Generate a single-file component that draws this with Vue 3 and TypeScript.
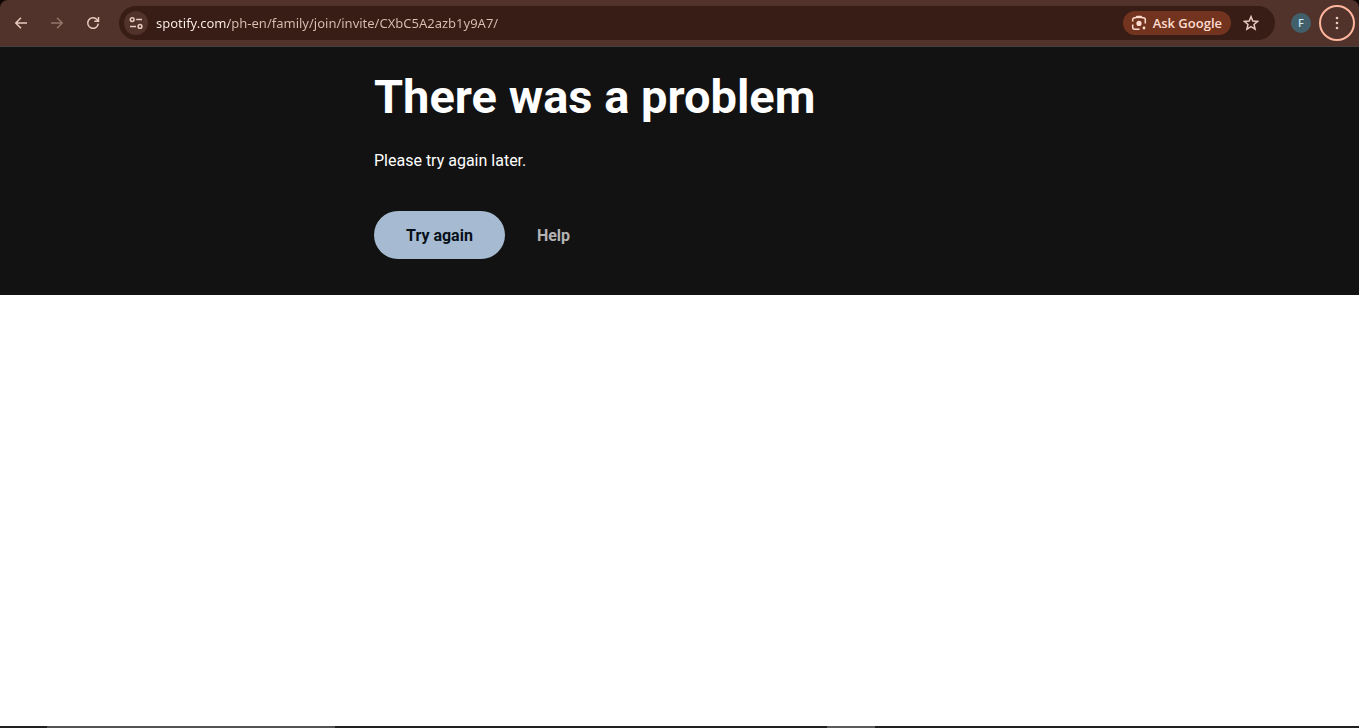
<script setup lang="ts">
import { ref } from 'vue'

const address = ref<string>('spotify.com/ph-en/family/join/invite/CXbC5A2azb1y9A7/')
</script>

<template>
  <div class="window">
    <header class="toolbar">
      <nav class="nav" aria-label="Browser navigation">
        <button type="button" class="tool" aria-label="Back">
          <svg viewBox="0 0 16 16" aria-hidden="true"><path d="M14 8H3M8 2.8L2.8 8L8 13.2" /></svg>
        </button>
        <button type="button" class="tool dim" aria-label="Forward" disabled>
          <svg viewBox="0 0 16 16" aria-hidden="true"><path d="M2 8H13M8 2.8L13.2 8L8 13.2" /></svg>
        </button>
        <button type="button" class="tool" aria-label="Reload">
          <svg viewBox="0 0 16 16" aria-hidden="true">
            <path d="M13.3 8.6A5.3 5.3 0 1 1 12 4.5L13.4 6M13.5 2V6.2H9.3" />
          </svg>
        </button>
      </nav>

      <div class="omnibox">
        <button type="button" class="site" aria-label="View site information">
          <svg viewBox="0 0 16 16" aria-hidden="true">
            <circle cx="4.2" cy="4.6" r="1.9" />
            <circle cx="12" cy="11.4" r="1.9" />
            <path d="M8.2 4.6H14M2 11.4H8" />
          </svg>
        </button>
        <input v-model="address" class="address" type="text" aria-label="Address bar" spellcheck="false" />
        <button type="button" class="ask">
          <svg viewBox="0 0 16 16" aria-hidden="true">
            <path d="M1.7 6.4V4.8A2 2 0 0 1 3.7 2.8H4.8L6 1.6H10L11.2 2.8H12.3A2 2 0 0 1 14.3 4.8V8.6M1.7 9.6V12.3A2 2 0 0 0 3.7 14.3H8.6" />
            <path d="M5.4 2.4H10.6" />
            <circle class="solid" cx="8" cy="8.4" r="2.6" />
            <circle class="solid" cx="13" cy="13" r="1.4" />
          </svg>
          <span>Ask Google</span>
        </button>
        <button type="button" class="star" aria-label="Bookmark this page">
          <svg viewBox="0 0 16 16" aria-hidden="true">
            <path d="M8 1.6L9.8 6L14.6 6.4L11 9.5L12.1 14.2L8 11.7L3.9 14.2L5 9.5L1.4 6.4L6.2 6Z" />
          </svg>
        </button>
      </div>

      <button type="button" class="profile" aria-label="Profile F">F</button>
      <button type="button" class="menu" aria-label="Browser menu">
        <svg viewBox="0 0 16 16" aria-hidden="true">
          <circle cx="8" cy="3" r="1.3" />
          <circle cx="8" cy="8" r="1.3" />
          <circle cx="8" cy="13" r="1.3" />
        </svg>
      </button>
    </header>

    <main class="page">
      <section class="problem">
        <div class="content">
          <h1>There was a problem</h1>
          <p>Please try again later.</p>
          <div class="actions">
            <button type="button" class="retry">Try again</button>
            <a class="help" href="#help">Help</a>
          </div>
        </div>
      </section>
    </main>

    <footer class="taskbar">
      <span class="search"></span>
      <span class="active"></span>
    </footer>
  </div>
</template>

<style>
body {
  margin: 0;
  background: #0d0504;
}
</style>

<style scoped>
.window {
  display: flex;
  flex-direction: column;
  min-height: 100vh;
  font-family: Roboto, "Liberation Sans", sans-serif;
}
button {
  padding: 0;
  border: 0;
  background: none;
  font: inherit;
  color: inherit;
}
svg {
  display: block;
  width: 16px;
  height: 16px;
  fill: none;
  stroke: currentColor;
  stroke-width: 1.5;
}
.toolbar {
  display: flex;
  align-items: center;
  box-sizing: border-box;
  height: 47px;
  padding: 0 4px 0 7px;
  border-bottom: 1px solid #474040;
  border-radius: 8px 8px 0 0;
  background: #51332b;
  color: #e8cbc0;
  font-family: "Noto Sans", "Open Sans", sans-serif;
}
.nav {
  display: flex;
  gap: 8px;
  margin-right: 12px;
}
.tool {
  display: grid;
  place-items: center;
  width: 28px;
  height: 28px;
}
.dim {
  color: #93756b;
}
.omnibox {
  display: flex;
  flex: 1;
  align-items: center;
  min-width: 0;
  height: 34px;
  padding: 0 16px 0 5px;
  border-radius: 17px;
  background: #381d16;
}
.site {
  display: grid;
  flex: none;
  place-items: center;
  width: 24px;
  height: 24px;
  border-radius: 50%;
  background: #51332b;
}
.address {
  flex: 1;
  min-width: 0;
  height: 24px;
  margin: 0 8px;
  padding: 0;
  border: 0;
  outline: 0;
  background: linear-gradient(to right, #fff1eb 73px, #dbbfb3 73px);
  background-clip: text;
  color: transparent;
  font-family: inherit;
  font-size: 13px;
}
.ask {
  display: flex;
  flex: none;
  align-items: center;
  gap: 6px;
  height: 24px;
  padding: 0 9px 0 8px;
  border-radius: 12px;
  background: #73341f;
  color: #ffdbcf;
  font-family: "Open Sans", "Noto Sans", sans-serif;
  font-size: 13px;
  font-weight: 600;
}
.solid {
  fill: currentColor;
  stroke: none;
}
.star {
  margin-left: 12px;
}
.profile {
  width: 20px;
  height: 20px;
  margin: 0 8px 0 16px;
  border-radius: 50%;
  background: #42606b;
  color: #d5edf5;
  font-size: 11px;
  font-weight: 500;
  line-height: 20px;
}
.menu {
  display: grid;
  place-items: center;
  width: 36px;
  height: 36px;
  border: 2px solid #ffb59d;
  border-radius: 50%;
}
.menu svg {
  fill: currentColor;
  stroke: none;
}
.page {
  flex: 1;
  background: #fff;
}
.problem {
  padding: 20px 24px 36px;
  background: #121212;
  color: #fff;
}
.content {
  max-width: 611px;
  margin: 0 auto;
}
h1 {
  margin: 0 0 22px;
  font-size: 47px;
  line-height: 60px;
}
p {
  margin: 0 0 38px;
  font-size: 16px;
  line-height: 24px;
}
.actions {
  display: flex;
  align-items: center;
  gap: 32px;
  font-size: 16px;
  font-weight: 700;
}
.retry {
  height: 48px;
  padding: 0 32px;
  border-radius: 24px;
  background: #a6bbd1;
  color: #06101a;
}
.help {
  color: #b3b3b3;
  text-decoration: none;
}
.taskbar {
  display: flex;
  height: 2px;
  background: #211f21;
}
.search {
  width: 288px;
  margin-left: 47px;
  background: #555255;
}
.active {
  width: 48px;
  margin-left: 492px;
  background: #5c5a5c;
}
</style>
